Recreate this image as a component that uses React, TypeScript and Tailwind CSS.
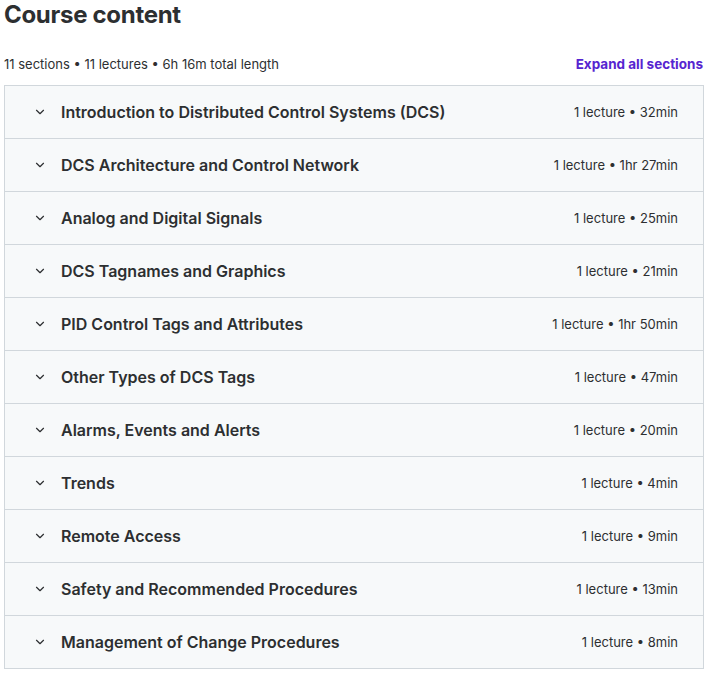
import { ChevronDown } from "lucide-react";

const sections = [
  { title: "Introduction to Distributed Control Systems (DCS)", meta: "1 lecture • 32min" },
  { title: "DCS Architecture and Control Network", meta: "1 lecture • 1hr 27min" },
  { title: "Analog and Digital Signals", meta: "1 lecture • 25min" },
  { title: "DCS Tagnames and Graphics", meta: "1 lecture • 21min" },
  { title: "PID Control Tags and Attributes", meta: "1 lecture • 1hr 50min" },
  { title: "Other Types of DCS Tags", meta: "1 lecture • 47min" },
  { title: "Alarms, Events and Alerts", meta: "1 lecture • 20min" },
  { title: "Trends", meta: "1 lecture • 4min" },
  { title: "Remote Access", meta: "1 lecture • 9min" },
  { title: "Safety and Recommended Procedures", meta: "1 lecture • 13min" },
  { title: "Management of Change Procedures", meta: "1 lecture • 8min" },
];

export default function App() {
  return (
    <div className="min-h-screen bg-white pl-1 pr-[2px] text-[#2d2f31] [font-family:Inter,'Noto_Sans',sans-serif]">
      <h2 className="text-[24px] font-bold leading-[30px] tracking-[-0.3px]">Course content</h2>

      <div className="mt-[24px] flex items-center justify-between pb-[11px]">
        <span className="text-[13px] leading-5">11 sections • 11 lectures • 6h 16m total length</span>
        <button type="button" className="mr-px text-[13.5px] font-bold leading-5 text-[#5624d0]">
          Expand all sections
        </button>
      </div>

      <div className="border border-b-0 border-[#d1d7dc]">
        {sections.map((section) => (
          <div
            key={section.title}
            className="flex h-[53px] items-center border-b border-[#d1d7dc] bg-[#f7f9fa] pb-px pl-[28px] pr-[25px]"
          >
            <ChevronDown size={14} strokeWidth={2} className="shrink-0" />
            <span className="ml-[14px] flex-1 text-[16px] font-semibold leading-5">{section.title}</span>
            <span className="text-[13px] leading-5">{section.meta}</span>
          </div>
        ))}
      </div>
    </div>
  );
}
